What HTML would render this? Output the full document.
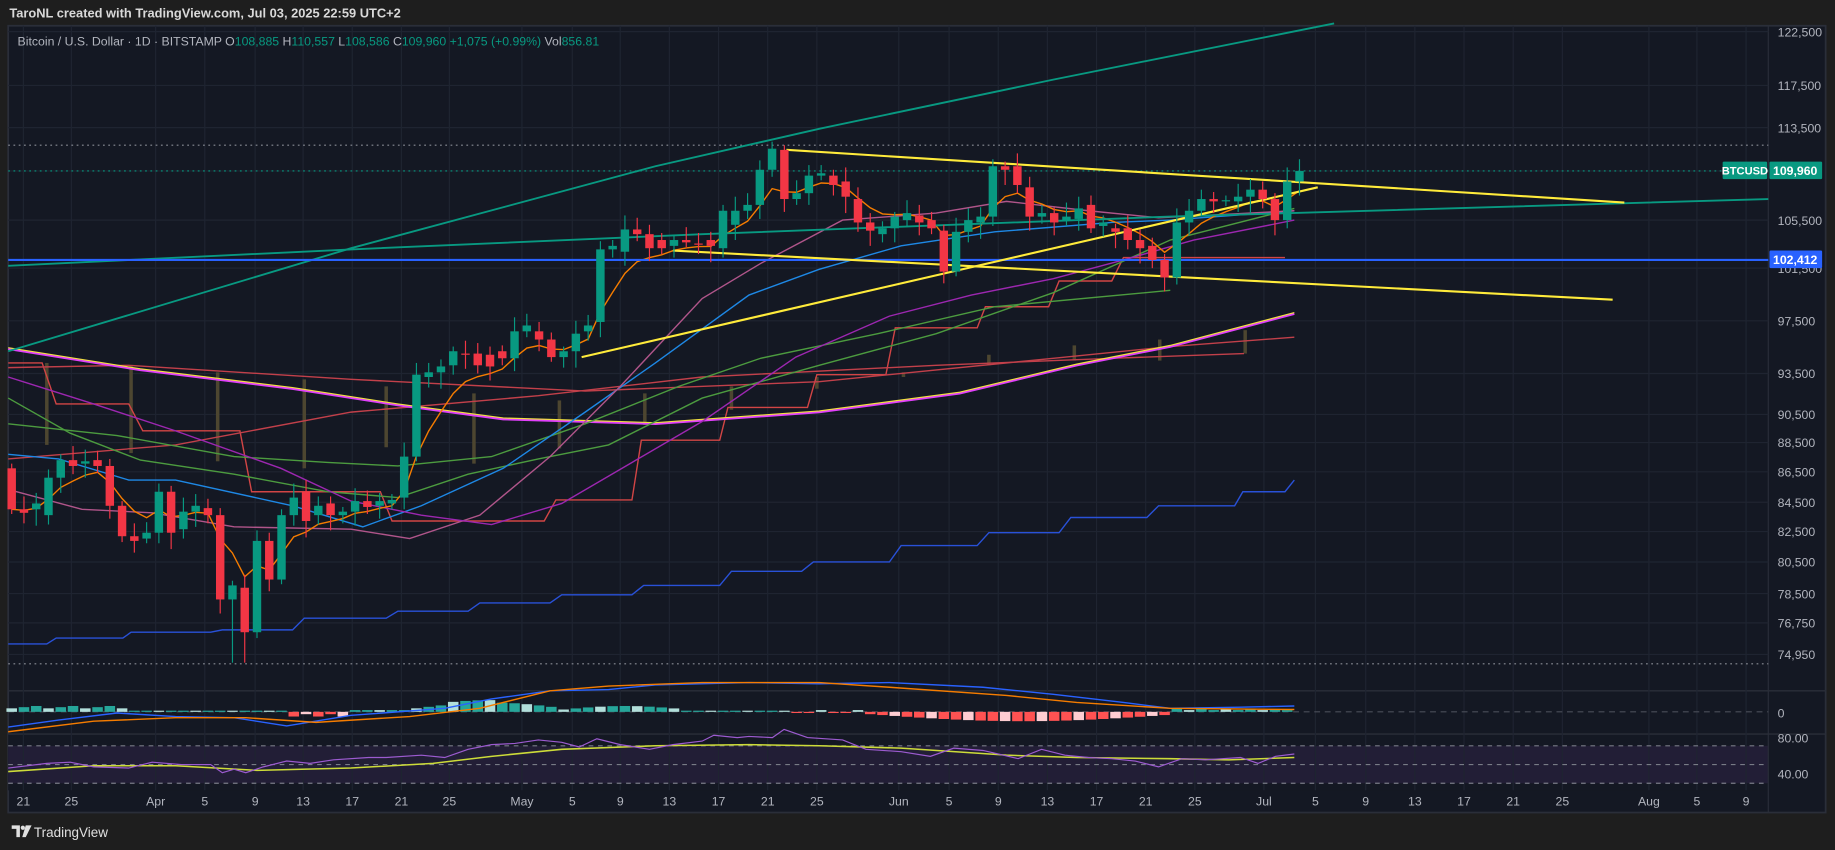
<!DOCTYPE html>
<html><head><meta charset="utf-8">
<style>
html,body{margin:0;padding:0;background:#1e1e1e;overflow:hidden}
svg{display:block}
text{font-family:"Liberation Sans",sans-serif}
</style></head>
<body>
<svg id="s" width="1835" height="850" viewBox="0 0 1568 726" preserveAspectRatio="none" xmlns="http://www.w3.org/2000/svg">
<rect x="0" y="0" width="1568" height="726" fill="#1e1e1e"/>
<text x="8" y="15" fill="#d9d9d9" font-size="11" font-weight="bold">TaroNL created with TradingView.com, Jul 03, 2025 22:59 UTC+2</text>
<rect x="7" y="22" width="1553" height="672" fill="#141823" stroke="#2a2e39" stroke-width="1.5"/>
<rect x="7" y="627" width="1504" height="48" fill="#141823"/>
<rect x="7" y="637" width="1504" height="32" fill="#221e36"/>
<line x1="1511" y1="22" x2="1511" y2="694" stroke="#2a2e39"/>
<line x1="7" y1="590" x2="1560" y2="590" stroke="#2a2e39" stroke-width="1.2"/>
<line x1="7" y1="627" x2="1560" y2="627" stroke="#2a2e39" stroke-width="1.2"/>
<g id="grid" stroke="#1f2431" stroke-width="1"></g>
<line x1="7" y1="124" x2="1511" y2="124" stroke="#8a8d96" stroke-dasharray="1.5,3"/>
<line x1="7" y1="146" x2="1511" y2="146" stroke="#089981" stroke-dasharray="1.5,3"/>
<line x1="7" y1="567" x2="1511" y2="567" stroke="#8a8d96" stroke-dasharray="1.5,3"/>
<line x1="7" y1="608" x2="1511" y2="608" stroke="#4a4e59" stroke-dasharray="5,4"/>
<line x1="7" y1="637" x2="1511" y2="637" stroke="#787b86" stroke-dasharray="4,4"/>
<line x1="7" y1="653" x2="1511" y2="653" stroke="#787b86" stroke-dasharray="4,4"/>
<line x1="7" y1="669" x2="1511" y2="669" stroke="#787b86" stroke-dasharray="4,4"/>
<g id="bars" fill="#4d4630"></g>
<g fill="none" stroke-width="1.2">
<polyline stroke="#2951d8" points="7,550 40,550 48,545 105,545 112,540 180,540 190,538 250,538 260,528 330,528 340,522 400,522 410,515 470,515 480,508 540,508 550,500 615,500 625,488 685,488 695,480 760,480 770,466 835,466 845,455 905,455 915,442 980,442 990,432 1055,432 1062,420 1098,420 1106,410"/>
<polyline stroke="#d24545" points="7,310 36,310 48,345 110,345 122,368 205,368 215,420 325,420 335,445 465,445 475,427 540,427 548,376 615,376 622,348 690,348 698,320 757,320 765,280 835,280 842,262 896,262 905,240 950,240 960,220 1098,220"/>
<polyline stroke="#c2404a" points="7,314 110,312 300,324 500,334 700,326 900,306 1000,296 1106,288"/>
<polyline stroke="#c2404a" points="7,392 150,380 300,352 460,338 600,322 800,312 950,306 1063,302"/>
<polyline stroke="#e040fb" stroke-width="2" points="7,298 120,316 250,332 340,346 430,358 560,362 700,352 820,336 920,312 1000,296 1106,268"/>
<polyline stroke="#f0e040" stroke-width="1" points="7,297 120,315 250,331 340,345 430,357 560,361 700,351 820,335 920,311 1000,295 1106,267"/>
<polyline stroke="#4c9b3f" points="7,340 60,370 120,393 200,405 280,420 340,425 400,405 460,392 520,380 600,340 700,312 800,285 900,250 1000,205 1106,178"/>
<polyline stroke="#4c9b3f" points="7,362 100,372 200,390 280,395 340,398 420,390 500,362 580,330 650,306 750,285 850,262 1000,248"/>
<polyline stroke="#1e88e5" points="7,388 50,392 110,410 150,410 250,432 310,450 360,432 430,400 500,352 560,310 640,252 700,230 770,210 850,198 950,190 1000,188 1106,180"/>
<polyline stroke="#b0558a" points="7,418 70,435 130,438 200,450 300,452 350,460 410,440 470,390 530,330 600,255 650,225 720,188 800,182 860,172 930,180 990,186 1106,180"/>
<polyline stroke="#9c27b0" points="7,322 80,345 150,368 240,400 300,428 360,440 420,448 480,430 540,395 600,360 680,305 760,270 830,252 900,238 960,222 1020,205 1106,188"/>
<polyline id="ema" stroke="#f57c00"/>
<polyline stroke="#089981" stroke-width="1.6" points="7,300 300,212 560,142 700,110 900,68 1140,20"/>
<polyline stroke="#089981" stroke-width="1.6" points="7,227 300,213 600,200 1000,185 1511,170"/>
<line x1="7" y1="222" x2="1511" y2="222" stroke="#2962ff" stroke-width="1.8"/>
<g stroke="#ffeb3b" stroke-width="1.8">
<line x1="672" y1="128" x2="1388" y2="173"/>
<line x1="497" y1="305" x2="1126" y2="160"/>
<line x1="575" y1="214" x2="1378" y2="256"/>
</g>
</g>
<g id="candles"></g>
<g id="macd"></g>
<polyline fill="none" stroke="#2962ff" stroke-width="1.2" points="7,621 50,615 100,609 150,612 200,613 245,620 300,611 380,605 420,597 470,590 520,589 560,585 640,583 700,584 760,583 840,587 900,593 960,600 1000,605 1060,604 1106,603"/>
<polyline fill="none" stroke="#f57c00" stroke-width="1.2" points="7,625 80,616 150,613 210,613 270,617 350,612 410,605 470,590 520,586 600,583 700,583 760,587 860,594 920,600 1000,605 1106,606"/>
<polyline fill="none" stroke="#cddc39" stroke-width="1.3" points="7,659 80,654 150,654 220,658 300,656 370,652 420,646 480,640 560,637 640,636 700,637 770,639 860,645 920,647 1000,648 1050,649 1106,647"/>
<polyline fill="none" stroke="#9c5bd0" stroke-width="1" points="7,656 40,652 60,651 80,655 110,656 130,651 155,653 180,653 190,660 200,657 210,660 225,655 245,650 265,652 285,649 315,647 330,647 360,645 380,647 400,640 420,636 440,635 460,632 480,634 495,638 510,631 530,636 555,640 575,636 600,633 610,628 630,630 640,629 660,630 670,623 690,630 720,632 740,640 770,642 795,646 815,639 840,641 870,648 890,640 910,645 930,647 950,648 970,650 990,655 1010,648 1030,649 1060,647 1075,652 1090,646 1106,644"/>
<g id="labels" fill="#b2b5be" font-size="10.5"></g>
<rect x="1472" y="138" width="38" height="15" fill="#089981" rx="1"/>
<text x="1491" y="149" fill="#fff" font-size="9.5" font-weight="bold" text-anchor="middle">BTCUSD</text>
<rect x="1512" y="138" width="45" height="15" fill="#089981" rx="1"/>
<text x="1534" y="149.5" fill="#fff" font-size="10.5" font-weight="bold" text-anchor="middle">109,960</text>
<rect x="1512" y="214" width="45" height="15" fill="#2962ff" rx="1"/>
<text x="1534" y="225.5" fill="#fff" font-size="10.5" font-weight="bold" text-anchor="middle">102,412</text>
<text x="15" y="39" font-size="10.5" fill="#b2b5be">Bitcoin / U.S. Dollar · 1D · BITSTAMP  O<tspan fill="#089981">108,885</tspan>  H<tspan fill="#089981">110,557</tspan>  L<tspan fill="#089981">108,586</tspan>  C<tspan fill="#089981">109,960</tspan>  <tspan fill="#089981">+1,075 (+0.99%)</tspan>  Vol<tspan fill="#089981">856.81</tspan></text>
<g fill="#e0e0e0"><path d="M10 705h7v10h-3v-7h-4z"/><circle cx="19.5" cy="707" r="1.8"/><path d="M22 705h5l-5 10h-3z"/></g>
<text x="29" y="715" fill="#e0e0e0" font-size="11.5">TradingView</text>
</svg>
<script>
var NS="http://www.w3.org/2000/svg";
function el(p,t,a){var e=document.createElementNS(NS,t);for(var k in a)e.setAttribute(k,a[k]);p.appendChild(e);return e;}
var grid=document.getElementById('grid');
var hy=[27,73,109,146,188,229,274,319,354,378,403,429,454,480,507,532,559];
hy.forEach(function(y){el(grid,'line',{x1:7,x2:1511,y1:y,y2:y});});
var dx=[20,61,133,175,218,259,301,343,384,446,489,530,572,614,656,698,768,811,853,895,937,979,1021,1080,1124,1167,1209,1251,1293,1335,1409,1450,1492];
var dl=["21","25","Apr","5","9","13","17","21","25","May","5","9","13","17","21","25","Jun","5","9","13","17","21","25","Jul","5","9","13","17","21","25","Aug","5","9"];
dx.forEach(function(x){el(grid,'line',{x1:x,x2:x,y1:22,y2:675});});
var lab=document.getElementById('labels');
var pl=[["122,500",31],["117,500",77],["113,500",113],["105,500",192],["101,500",233],["97,500",278],["93,500",323],["90,500",358],["88,500",382],["86,500",407],["84,500",433],["82,500",458],["80,500",484],["78,500",511],["76,750",536],["74,950",563],["0",613],["80.00",634],["40.00",665]];
pl.forEach(function(p){var t=el(lab,'text',{x:1519,y:p[1]});t.textContent=p[0];});
dx.forEach(function(x,i){var t=el(lab,'text',{x:x,y:688,'text-anchor':'middle'});t.textContent=dl[i];});
var bars=document.getElementById('bars');
[[40,310,380],[112,312,387],[186,318,394],[260,324,400],[330,330,382],[405,336,396],[478,342,383],[551,336,363],[625,330,350],[698,322,332],[772,318,322],[845,303,312],[918,295,308],[991,290,308],[1064,282,302]].forEach(function(b){el(bars,'rect',{x:b[0]-1.5,y:b[1],width:3,height:b[2]-b[1]});});
var C=[[400,435],[435,438],[435,430],[440,408],[408,393],[393,398],[396,394],[393,398],[398,432],[432,458],[458,462],[460,455],[455,420],[420,455],[452,437],[437,432],[434,440],[440,512],[512,500],[502,540],[540,462],[462,495],[495,440],[440,425],[420,445],[440,432],[430,440],[440,437],[437,428],[428,433],[432,428],[430,427],[425,390],[390,320],[322,318],[318,313],[312,300],[302,302],[302,312],[303,313],[300,306],[306,283],[283,278],[283,290],[290,305],[305,300],[300,285],[283,278],[275,213],[213,210],[215,196],[196,200],[200,212],[205,212],[210,205],[205,207],[208,208],[205,210],[212,180],[192,180],[180,175],[175,145],[145,127],[128,170],[170,165],[165,150],[150,148],[150,158],[155,168],[170,190],[190,197],[200,195],[195,185],[188,182],[184,190],[188,195],[197,232],[232,198],[198,188],[190,185],[185,142],[142,145],[142,158],[160,185],[185,182],[182,190],[188,185],[187,178],[175,195],[193,190],[195,198],[195,205],[205,212],[210,222],[222,237],[237,190],[190,180],[180,170],[170,172],[172,171],[172,168],[168,162],[162,170],[170,188],[188,155],[155,146]];
var cg=document.getElementById('candles'),ema=[],e=C[0][1];
C.forEach(function(c,i){var x=10+i*10.48,o=c[0],cl=c[1],up=cl<o,col=up?'#089981':'#f23645';
var top=Math.min(o,cl),bot=Math.max(o,cl),h=top-4-(i*7%9),l=bot+4+(i*5%11);
if(i==19||i==18)l=566;
el(cg,'line',{x1:x,x2:x,y1:h,y2:l,stroke:col,'stroke-width':1});
el(cg,'rect',{x:x-3.6,y:top,width:7.2,height:Math.max(1,bot-top),fill:col});
e=e+(cl-e)*0.3;ema.push(x.toFixed(1)+','+e.toFixed(1));});
document.getElementById('ema').setAttribute('points',ema.join(' '));
var mg=document.getElementById('macd');
for(var i=0;i<105;i++){var x=10+i*10.48,v;
if(i<10)v=3+(i%3);
else if(i<23)v=1;
else if(i<28)v=-2-(i%2)*2;
else if(i<33)v=1.5;
else if(i<45)v=3+5*Math.sin((i-33)/12*Math.PI)+ (i>=36&&i<40?2:0);
else if(i<55)v=2+3*Math.sin((i-45)/10*Math.PI);
else if(i<64)v=1;
else if(i<70)v=(i%3)?-0.5:1.5;
else if(i<95)v=-(2+6*Math.sin((i-70)/25*Math.PI));
else v=1.5+(i%2);
var h=Math.abs(v),y=v>0?608-h:608,pos=v>0;
var col=pos?(i%3?'#26a69a':'#b2dfdb'):(i%3?'#ff5252':'#ffcdd2');
el(mg,'rect',{x:x-4.5,y:y,width:9,height:Math.max(1,h),fill:col});}
</script>
</body></html>
